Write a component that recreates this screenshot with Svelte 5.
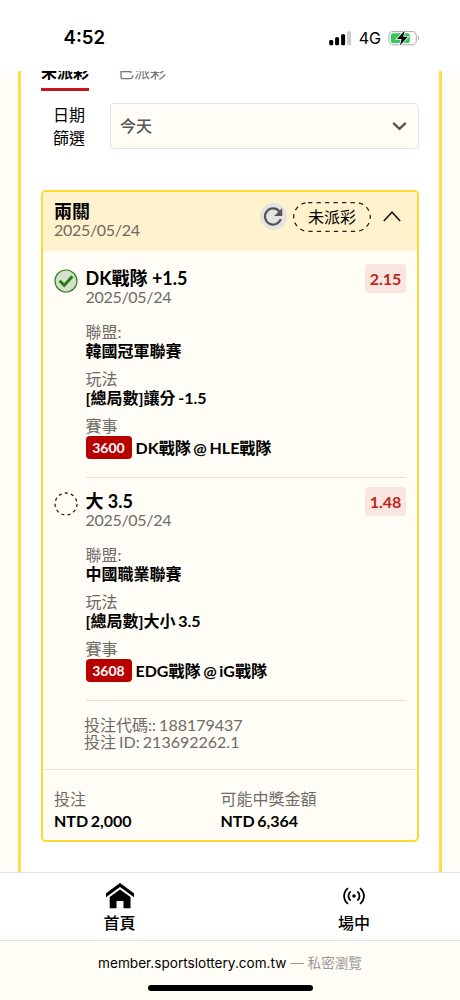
<script lang="ts">
  type Leg = {
    pick: string;
    date: string;
    odds: string;
    won: boolean;
    league: string;
    market: string;
    code: string;
    match: string;
  };

  const tabs = ['未派彩', '已派彩'];
  let activeTab = $state('未派彩');
  let expanded = $state(true);

  const legs: Leg[] = [
    {
      pick: 'DK戰隊 +1.5',
      date: '2025/05/24',
      odds: '2.15',
      won: true,
      league: '韓國冠軍聯賽',
      market: '[總局數]讓分 -1.5',
      code: '3600',
      match: 'DK戰隊 @ HLE戰隊'
    },
    {
      pick: '大 3.5',
      date: '2025/05/24',
      odds: '1.48',
      won: false,
      league: '中國職業聯賽',
      market: '[總局數]大小 3.5',
      code: '3608',
      match: 'EDG戰隊 @ iG戰隊'
    }
  ];
</script>

<div class="screen">
  <header class="status-bar">
    <span class="clock">4:52</span>
    <div class="status-icons">
      <svg class="signal" width="23" height="15" viewBox="0 0 23 15">
        <rect x="0.2" y="9" width="4" height="5.2" rx="1.2" />
        <rect x="6.1" y="6.2" width="4" height="8" rx="1.2" />
        <rect x="12.1" y="3.2" width="4" height="11" rx="1.2" />
        <rect class="dim" x="18.1" y="0.2" width="4" height="14" rx="1.2" />
      </svg>
      <span class="network">4G</span>
      <svg class="battery" width="33" height="17" viewBox="0 0 33 17">
        <rect x="0.9" y="1.4" width="27.4" height="13.4" rx="4.2" fill="#fff" stroke="#a8a8a8" />
        <path d="M29.9 5.7c1.7.5 1.7 4.2 0 4.7z" fill="#a8a8a8" />
        <rect x="2.8" y="3.2" width="19" height="9.8" rx="2.6" fill="#35c759" />
        <path d="M16.9.5 8.9 9h4.7l-1.8 6.5 8.1-8.8h-4.8z" fill="#000" stroke="#fff" stroke-width="1.6" paint-order="stroke" />
      </svg>
    </div>
  </header>

  <main class="page">
    <section class="frame">
      <nav class="tabs">
        {#each tabs as tab}
          <button class="tab" class:active={tab === activeTab} type="button" onclick={() => (activeTab = tab)}>
            {tab}
          </button>
        {/each}
      </nav>

      <div class="filter">
        <span class="filter-label">日期<br />篩選</span>
        <button class="select" type="button">
          <span>今天</span>
          <svg width="15" height="10" viewBox="0 0 15 10">
            <path d="M1.2 1.8 7.5 7.8l6.3-6" fill="none" stroke="#555" stroke-width="2.3" />
          </svg>
        </button>
      </div>

      <article class="bet">
        <header class="bet-header">
          <div class="bet-title">
            <h2>兩關</h2>
            <p class="date">2025/05/24</p>
          </div>
          <div class="bet-actions">
            <button class="refresh" type="button" aria-label="refresh">
              <svg width="20" height="20" viewBox="0 0 20 20">
                <path d="M16.4 4.3A8.1 8.1 0 1 0 17.8 12" fill="none" stroke="#555" stroke-width="2.2" />
                <path d="M19.2 1v8h-8z" fill="#555" />
              </svg>
            </button>
            <span class="state">
              <svg width="78" height="30" viewBox="0 0 78 30">
                <rect x="0.7" y="0.7" width="76.6" height="28.6" rx="14.3" />
              </svg>
              未派彩
            </span>
            <button class="toggle" type="button" aria-label="toggle" onclick={() => (expanded = !expanded)}>
              <svg width="18" height="11" viewBox="0 0 18 11">
                <path d="M0.8 10 9 1.2l8.2 8.8" fill="none" stroke="#151515" stroke-width="1.5" />
              </svg>
            </button>
          </div>
        </header>

        {#if expanded}
          <div class="legs">
            {#each legs as leg}
              <section class="leg">
                <svg class="leg-mark" width="24" height="24" viewBox="0 0 24 24">
                  {#if leg.won}
                    <circle cx="12" cy="12" r="11" fill="#d5e1cb" stroke="#33802a" stroke-width="1.2" />
                    <path d="M5.6 11.8 10.2 16.4 18.4 7.3" fill="none" stroke="#247d16" stroke-width="3" />
                  {:else}
                    <circle cx="12" cy="12" r="11" fill="none" stroke="#222" stroke-width="1.3" stroke-dasharray="3.1 3.18" />
                  {/if}
                </svg>
                <div class="leg-body">
                  <div class="leg-top">
                    <div>
                      <h3>{leg.pick}</h3>
                      <p class="date">{leg.date}</p>
                    </div>
                    <span class="odds">{leg.odds}</span>
                  </div>
                  <dl>
                    <dt>聯盟:</dt>
                    <dd>{leg.league}</dd>
                    <dt>玩法</dt>
                    <dd>{leg.market}</dd>
                    <dt>賽事</dt>
                    <dd class="match"><span class="code">{leg.code}</span>{leg.match}</dd>
                  </dl>
                </div>
              </section>
            {/each}
            <div class="ids">
              <p>投注代碼:: 188179437</p>
              <p>投注 ID: 213692262.1</p>
            </div>
          </div>
        {/if}

        <footer class="totals">
          <div>
            <span>投注</span>
            <strong>NTD 2,000</strong>
          </div>
          <div>
            <span>可能中獎金額</span>
            <strong>NTD 6,364</strong>
          </div>
        </footer>
      </article>
    </section>
  </main>

  <nav class="bottom-nav">
    <a class="nav-item" href="#home">
      <svg width="28" height="26" viewBox="0 0 28 26">
        <path d="M14 0 28 10.2v4L14 4 0 14.2v-4z" />
        <path d="M14 6.5 24.5 14v11.3h-7v-7.2h-7v7.2H3.7V14z" />
      </svg>
      <span>首頁</span>
    </a>
    <a class="nav-item live" href="#live">
      <svg width="22" height="18" viewBox="0 0 22 18">
        <circle cx="11" cy="9" r="1.8" />
        <path d="M5 1.1C-.2 5.3-.2 12.7 5 16.9M17 1.1c5.2 4.2 5.2 11.6 0 15.8M7.7 4.4c-3 2.3-3 6.9 0 9.2M14.3 4.4c3 2.3 3 6.9 0 9.2" fill="none" stroke="#000" stroke-width="1.8" />
      </svg>
      <span>場中</span>
    </a>
  </nav>

  <footer class="browser-bar">
    <p>member.sportslottery.com.tw <span>— 私密瀏覽</span></p>
    <div class="home-indicator"></div>
  </footer>
</div>

<style>
  :global(body) {
    margin: 0;
    background: #fff;
  }

  .screen {
    width: 460px;
    height: 1000px;
    display: flex;
    flex-direction: column;
    overflow: hidden;
    font-family: Lato, 'Noto Sans CJK TC', sans-serif;
    font-size: 16px;
    color: #000;
  }

  p,
  h2,
  h3,
  dl,
  dd {
    margin: 0;
  }

  svg {
    display: block;
    flex: none;
  }

  button {
    font: inherit;
    color: inherit;
    border: 0;
    padding: 0;
    background: none;
  }

  .status-bar {
    height: 71px;
    flex: none;
    box-sizing: border-box;
    display: flex;
    justify-content: space-between;
    align-items: flex-start;
    padding: 26px 39px 0 63.5px;
    font-family: Inter, sans-serif;
  }

  .clock {
    font-size: 18.6px;
    font-weight: 600;
    line-height: 22px;
  }

  .status-icons {
    display: flex;
    align-items: center;
  }

  .signal .dim {
    fill: #ccc;
  }

  .network {
    font-size: 16px;
    font-weight: 400;
    line-height: 24px;
    margin: 0 7px;
  }

  .page {
    height: 801px;
    flex: none;
    overflow: hidden;
    display: flex;
    padding: 0 18px;
    background: #fffdf5;
  }

  .frame {
    flex: 1;
    border: solid #ffdc48;
    border-width: 0 3px;
    background: #fff;
    padding: 0 20px;
  }

  .tabs {
    display: flex;
    gap: 29px;
    margin-top: -11px;
  }

  .tab {
    height: 31px;
    line-height: 24px;
    padding-bottom: 4px;
    color: #777;
    border-bottom: 3px solid transparent;
    box-sizing: border-box;
  }

  .tab.active {
    color: #000;
    font-weight: 700;
    border-bottom-color: #c8161d;
  }

  .filter {
    display: flex;
    align-items: center;
    justify-content: space-between;
    margin-top: 12px;
  }

  .filter-label {
    padding-left: 12px;
    line-height: 23px;
  }

  .select {
    width: 309px;
    height: 46px;
    box-sizing: border-box;
    display: flex;
    align-items: center;
    justify-content: space-between;
    padding: 0 11px 2px 9px;
    border: 1px solid #e6e3da;
    border-radius: 4px;
    background: #fffdf5;
    color: #555;
    font-weight: 500;
  }

  .select svg {
    margin-top: 2px;
  }

  .bet {
    height: 652px;
    box-sizing: border-box;
    margin-top: 41px;
    border: 2px solid #ffd92e;
    border-radius: 5px;
    background: #fffdf5;
    overflow: hidden;
    display: flex;
    flex-direction: column;
  }

  .bet-header {
    height: 59px;
    flex: none;
    box-sizing: border-box;
    display: flex;
    justify-content: space-between;
    padding: 9px 16px 0 11px;
    background: #fff2cc;
  }

  .bet-title h2 {
    font-size: 18px;
    line-height: 20px;
  }

  .date {
    line-height: 18px;
    letter-spacing: -0.3px;
    color: #6d6b66;
  }

  .bet-actions {
    height: 32px;
    display: flex;
    align-items: center;
  }

  .refresh {
    width: 27px;
    height: 27px;
    margin: -1px 6px 0 0;
    padding: 0 0 0 3px;
    box-sizing: border-box;
    border-radius: 50%;
    background: #e3e3e3;
    display: flex;
    align-items: center;
  }

  .state {
    position: relative;
    width: 78px;
    height: 30px;
    line-height: 30px;
    text-align: center;
    margin: 0 12px 0 0;
  }

  .state svg {
    position: absolute;
    inset: 0;
  }

  .state rect {
    fill: none;
    stroke: #222;
    stroke-width: 1.3;
    stroke-dasharray: 4.3 4.2;
  }

  .toggle {
    padding-bottom: 2px;
  }

  .legs {
    height: 518px;
    flex: none;
  }

  .leg {
    height: 223px;
    display: flex;
    gap: 8px;
    padding: 0 11px 0 11px;
    box-sizing: border-box;
  }

  .leg-mark {
    margin: 18px 0 0 -0.5px;
  }

  .leg-body {
    flex: 1;
    padding-top: 13px;
    height: 227px;
    box-sizing: border-box;
    border-bottom: 1px solid #e2dfd8;
  }

  .leg-top {
    display: flex;
    justify-content: space-between;
    height: 58px;
  }

  h3 {
    font-size: 18px;
    line-height: 20px;
    padding-top: 4px;
  }

  .odds {
    height: 29px;
    width: 41px;
    line-height: 30px;
    text-align: center;
    border-radius: 4px;
    background: #f9e6e0;
    color: #b9271d;
    font-weight: 700;
  }

  dt {
    line-height: 20px;
    color: #6d6b66;
  }

  dd {
    line-height: 19px;
    font-weight: 700;
    margin: -1px 0 9px;
    word-spacing: -1.2px;
  }

  .match {
    display: flex;
    align-items: center;
    gap: 4px;
    line-height: 23px;
    margin-top: 0;
  }

  .code {
    width: 46px;
    height: 23px;
    border-radius: 4px;
    background: #b90000;
    color: #fff;
    font-size: 14px;
    text-align: center;
  }

  .ids {
    padding: 19px 0 0 41px;
    line-height: 17px;
    word-spacing: -1px;
    color: #6d6b66;
  }

  .totals {
    flex: 1;
    display: grid;
    grid-template-columns: 166.5px 1fr;
    padding: 18px 10px 0 11px;
    border-top: 1px solid #e6e3da;
    line-height: 22px;
    word-spacing: -1.2px;
  }

  .totals span {
    display: block;
    color: #6d6b66;
  }

  .bottom-nav {
    height: 69px;
    flex: none;
    box-sizing: border-box;
    display: flex;
    border-top: 1px solid #e3e3e3;
    border-bottom: 1px solid #e3e3e3;
    background: #fff;
  }

  .nav-item {
    width: 239px;
    flex: none;
    display: flex;
    flex-direction: column;
    align-items: center;
    padding-top: 10px;
    color: #000;
    text-decoration: none;
    font-weight: 500;
  }

  .nav-item span {
    line-height: 22px;
    margin-top: 3px;
  }

  .live {
    width: 230px;
    padding-top: 14px;
  }

  .live span {
    margin-top: 7px;
  }

  .browser-bar {
    height: 60px;
    box-sizing: border-box;
    flex: none;
    padding-top: 12px;
    background: #fffdf5;
    text-align: center;
    font-family: Inter, 'Noto Sans CJK TC', sans-serif;
    font-size: 13.6px;
    line-height: 20px;
  }

  .browser-bar span {
    color: #999;
  }

  .home-indicator {
    width: 165px;
    height: 6px;
    margin: 12px auto 0;
    border-radius: 3px;
    background: #000;
  }
</style>
